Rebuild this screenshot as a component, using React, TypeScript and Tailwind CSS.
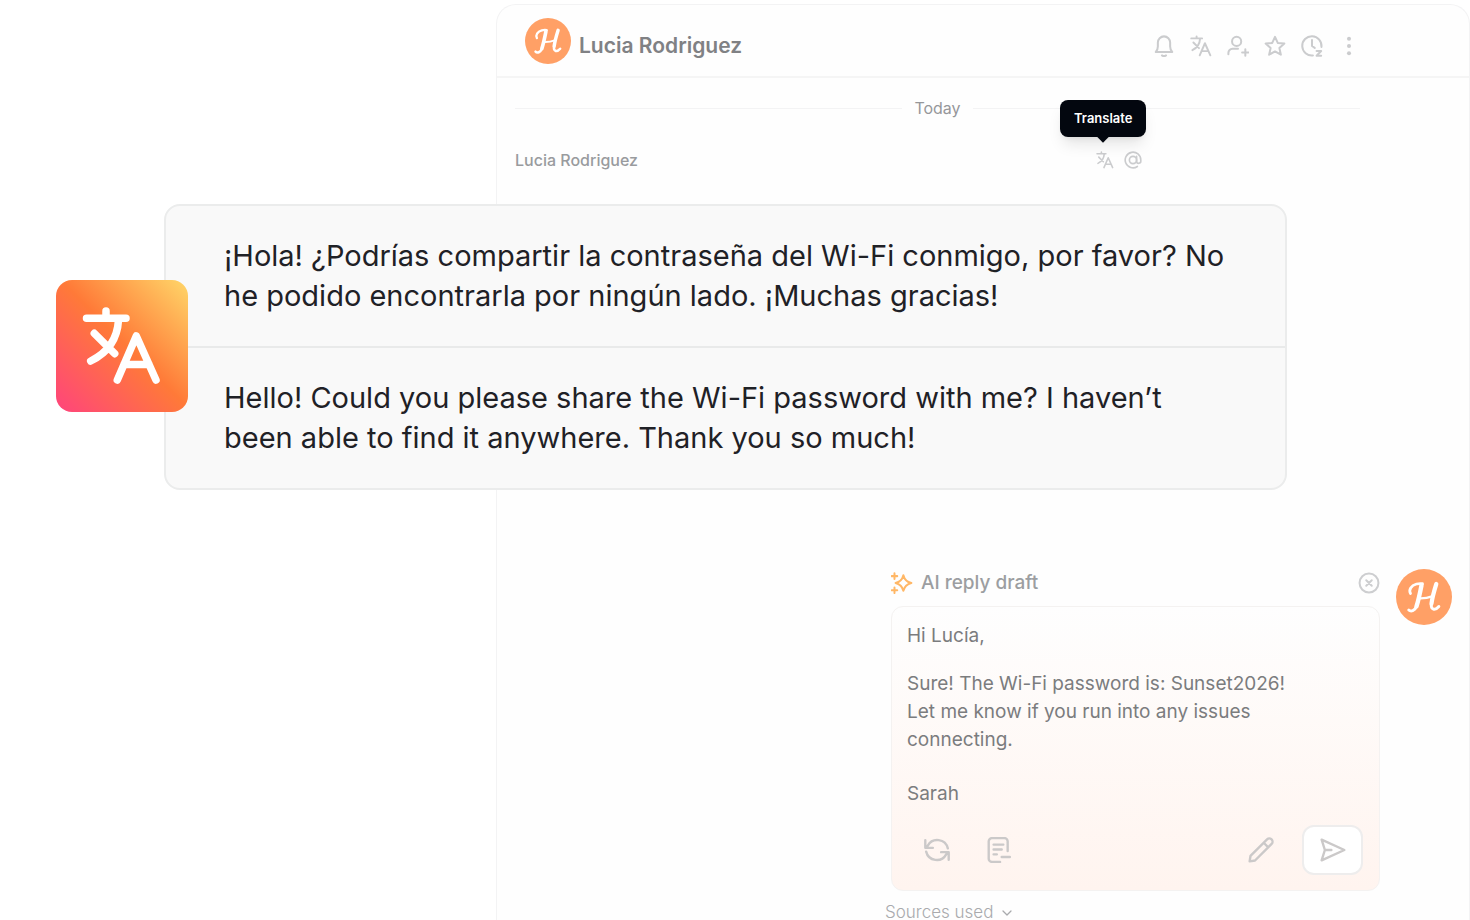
import type { ReactNode, SVGProps } from 'react';

type IconProps = SVGProps<SVGSVGElement>;

function Icon({ children, className, ...rest }: IconProps & { children: ReactNode }) {
  return (
    <svg
      viewBox="0 0 24 24"
      fill="none"
      stroke="currentColor"
      strokeWidth={2.2}
      strokeLinecap="round"
      strokeLinejoin="round"
      aria-hidden="true"
      className={className}
      {...rest}
    >
      {children}
    </svg>
  );
}

const BellIcon = (p: IconProps) => (
  <Icon {...p}>
    <path d="M3 18.500h18c-1.600-1.700-2.300-3.600-2.300-6V8.200a6.700 6.700 0 0 0-13.400 0v4.300c0 2.400-.7 4.300-2.300 6Z" />
    <path d="M9.800 22.300c1.300.9 3.100.9 4.400 0" />
  </Icon>
);

const TranslateIcon = (p: IconProps) => (
  <Icon viewBox="0 0 80 80" strokeWidth={7} {...p}>
    <path d="M4.500 12.300H44M24 5v7.300M36.500 14C35.500 32 27 46 8.700 55M12.300 27.300l20.400 20.400M35.300 74l19-44L74 74M42 58.500h25" />
  </Icon>
);

const UserPlusIcon = (p: IconProps) => (
  <Icon {...p}>
    <circle cx="10.500" cy="7" r="5" />
    <path d="M1.500 21v-1.500a4.500 4.500 0 0 1 4.500-4.500h6M20 15.500v7M16.500 19h7" />
  </Icon>
);

const StarIcon = (p: IconProps) => (
  <Icon {...p}>
    <path d="m12 2 3 6.600 7.200.8-5.400 4.900 1.600 7.200L12 17.900l-6.400 3.600 1.600-7.200L1.800 9.400 9 8.600Z" />
  </Icon>
);

const SnoozeIcon = (p: IconProps) => (
  <Icon {...p}>
    <path d="M13 22.300A10.500 10.500 0 1 1 22.300 13M12 5.500V12l3 2M17 17.500h5l-5 5.200h5" />
  </Icon>
);

const MoreIcon = (p: IconProps) => (
  <Icon {...p} fill="currentColor" stroke="none">
    <circle cx="12" cy="4" r="2.200" />
    <circle cx="12" cy="12" r="2.200" />
    <circle cx="12" cy="20" r="2.200" />
  </Icon>
);

const MentionIcon = (p: IconProps) => (
  <Icon {...p}>
    <circle cx="12" cy="12" r="4.800" />
    <path d="M16.800 7.200v6.600a2.800 2.800 0 0 0 5.600-.4V12a10.400 10.400 0 1 0-4.600 8.600" />
  </Icon>
);

const SparkleIcon = (p: IconProps) => (
  <Icon {...p}>
    <path d="M13.500 3.500c1.200 5 3.500 7.300 8.700 8.500-5.200 1.200-7.500 3.500-8.700 8.500-1.200-5-3.500-7.300-8.500-8.500 5-1.200 7.300-3.500 8.500-8.500ZM3.800 1.500v6M.8 4.500h6M3.800 17v6M.8 20h6" />
  </Icon>
);

const CloseIcon = (p: IconProps) => (
  <Icon {...p}>
    <circle cx="12" cy="12" r="10.300" />
    <path d="m9 9 6 6M15 9l-6 6" />
  </Icon>
);

const RefreshIcon = (p: IconProps) => (
  <Icon {...p}>
    <path d="M22 10.500A10 10 0 0 0 3.500 8L1.500 10M1.200 3v7h7M2 13.500A10 10 0 0 0 20.500 16l2-2M22.800 21v-7h-7" />
  </Icon>
);

const NoteIcon = (p: IconProps) => (
  <Icon {...p}>
    <path d="M13 23H5.500a3 3 0 0 1-3-3V4a3 3 0 0 1 3-3H17a3 3 0 0 1 3 3v9M7 7h9M7 11.500h7.500M7 16h3M14.500 18.500h7.500" />
  </Icon>
);

const PencilIcon = (p: IconProps) => (
  <Icon {...p}>
    <path d="m1.500 22.500.8-5L17.600 2.200a2.970 2.970 0 0 1 4.200 4.200L6.500 21.700ZM14.500 5.300l4.200 4.200" />
  </Icon>
);

const SendIcon = (p: IconProps) => (
  <Icon {...p}>
    <path d="M1.500 2.500 22.500 12l-21 9.500L4.500 12ZM4.500 12h6" />
  </Icon>
);

const ChevronIcon = (p: IconProps) => (
  <Icon {...p}>
    <path d="m4 8 8 8 8-8" />
  </Icon>
);

function BrandMark({ className }: { className: string }) {
  return (
    <svg viewBox="0 0 56 56" role="img" aria-label="Brand" className={className}>
      <circle cx="28" cy="28" r="28" fill="#ffa066" />
      <g fill="none" stroke="#fff" strokeLinecap="round" strokeLinejoin="round">
        <path strokeWidth="2.800" d="M14.500 24.500C12.500 21 15 16.500 20.500 15c2-.5 4-.6 6-.3" />
        <path strokeWidth="4.400" d="M25.500 16.300c-1.500 7.700-3 14.700-5 21" />
        <path strokeWidth="3" d="M20.300 37.500c-1.400 4.500-5.500 5.500-7.500 3.500" />
        <path strokeWidth="2.400" d="M23 29.300c4.500.2 9-.4 13-2" />
        <path strokeWidth="4.200" d="M40.300 15c-2.200 7-4 13.500-4.800 19.500" />
        <path strokeWidth="3" d="M35.300 35c-.6 5.800 3.700 7 7.500 2.500" />
      </g>
    </svg>
  );
}

const headerActions = [
  { label: 'Notifications', Glyph: BellIcon },
  { label: 'Translate conversation', Glyph: TranslateIcon },
  { label: 'Assign', Glyph: UserPlusIcon },
  { label: 'Favorite', Glyph: StarIcon },
  { label: 'Snooze', Glyph: SnoozeIcon },
  { label: 'More', Glyph: MoreIcon },
];

function TranslationCard() {
  return (
    <article className="relative mt-8 mr-[182px] ml-[-351px] rounded-2xl border-2 border-[#ebecec] bg-[#f9f9f9] text-[29px] leading-10 text-[#1f2126]">
      <p lang="es" className="border-b-2 border-[#e9eaea] py-[30px] pr-14 pl-[58px]">
        ¡Hola! ¿Podrías compartir la contraseña del Wi-Fi conmigo, por favor? No he podido encontrarla por ningún lado. ¡Muchas gracias!
      </p>
      <p className="py-[30px] pr-16 pl-[58px]">
        Hello! Could you please share the Wi-Fi password with me? I haven’t been able to find it anywhere. Thank you so much!
      </p>
      <div className="absolute top-[74px] left-[-110px] flex size-[132px] items-center justify-center rounded-2xl bg-[linear-gradient(45deg,#ff4778_3%,#ff7a38_52%,#ffd166_97%)] text-white">
        <TranslateIcon className="size-20" strokeWidth={7.5} />
      </div>
    </article>
  );
}

function ReplyDraft() {
  return (
    <section className="mt-[79px] mr-[17px] ml-auto flex w-[561px] items-start justify-between">
      <div className="w-[489px]">
        <header className="flex h-7 items-center gap-2 text-[#9c9ea1]">
          <SparkleIcon className="size-[22px] text-[#ffb766]" />
          <h2 className="flex-1 text-[19px] leading-7 font-medium">AI reply draft</h2>
          <button type="button" aria-label="Dismiss draft" className="text-[#cdced0]">
            <CloseIcon className="size-[22px]" />
          </button>
        </header>
        <div className="mt-[9px] rounded-xl border border-[#f4f2f1] bg-gradient-to-b from-[#fefefe] to-[#fff4ef] py-[15px] pr-4 pl-[15px] text-[19px] leading-7 text-[#7b7c7e]">
          <p>Hi Lucía,</p>
          <p className="mt-5">Sure! The Wi-Fi password is: Sunset2026!</p>
          <p>
            Let me know if you run into any issues
            <br />
            connecting.
          </p>
          <p className="mt-[26px]">Sarah</p>
          <div className="mt-[17px] flex items-center text-[#cbc9c9]">
            <button type="button" aria-label="Regenerate" className="ml-[17px]">
              <RefreshIcon className="size-[26px]" />
            </button>
            <button type="button" aria-label="Summary" className="ml-9">
              <NoteIcon className="size-[26px]" />
            </button>
            <button type="button" aria-label="Edit" className="mr-7 ml-auto">
              <PencilIcon className="size-[26px]" />
            </button>
            <button type="button" aria-label="Send" className="flex h-[50px] w-[61px] items-center justify-center rounded-xl border-2 border-[#eeeded] bg-white">
              <SendIcon className="size-[26px]" />
            </button>
          </div>
        </div>
        <button type="button" className="mt-[13px] -ml-[6px] flex items-center gap-2 text-[17px] leading-4 font-light text-[#a9aaad]">
          Sources used
          <ChevronIcon className="mt-px size-3" strokeWidth={2.5} />
        </button>
      </div>
      <BrandMark className="size-14" />
    </section>
  );
}

export default function App() {
  return (
    <main className="h-screen overflow-hidden bg-white pt-1 pl-[496px] font-['Inter',sans-serif]">
      <section className="min-h-full rounded-t-[20px] border border-b-0 border-[#f3f3f4] bg-[#fefefe]">
        <header className="flex h-[73px] items-start justify-between border-b-2 border-[#f5f5f5] pt-[13px] pr-[109px] pl-7">
          <div className="flex items-start gap-2">
            <BrandMark className="size-[46px]" />
            <h1 className="mt-[14px] text-[21px] leading-7 font-semibold text-[#808184]">Lucia Rodriguez</h1>
          </div>
          <nav aria-label="Conversation actions" className="mt-[17px] flex gap-[15px] text-[#cbccce]">
            {headerActions.map(({ label, Glyph }) => (
              <button key={label} type="button" aria-label={label}>
                <Glyph className="size-[22px]" />
              </button>
            ))}
          </nav>
        </header>
        <div className="pl-[18px]">
          <div className="mt-[18px] mr-[109px] flex items-center gap-3 text-base leading-6 text-[#96979a]">
            <span className="h-px flex-1 bg-[#f3f3f4]" />
            <time>Today</time>
            <span className="h-px flex-1 bg-[#f3f3f4]" />
          </div>
          <div className="mt-7 mr-[327px] flex items-center justify-between text-base leading-6 text-[#999b9e]">
            <p className="font-medium">Lucia Rodriguez</p>
            <div className="relative flex gap-[10px] text-[#cbccce]">
              <button type="button" aria-describedby="translate-tip" aria-label="Translate message">
                <TranslateIcon className="size-[18px]" />
              </button>
              <button type="button" aria-label="Mention">
                <MentionIcon className="size-[18px]" />
              </button>
              <div id="translate-tip" role="tooltip" className="absolute bottom-8 left-[-36px] rounded-lg bg-[#03070f] px-[14px] py-2 text-[13px] leading-[21px] font-semibold text-white shadow-lg">
                Translate
                <span className="absolute top-full left-1/2 size-2 -translate-x-1/2 -translate-y-1 rotate-45 bg-[#03070f]" />
              </div>
            </div>
          </div>
          <TranslationCard />
          <ReplyDraft />
        </div>
      </section>
    </main>
  );
}
